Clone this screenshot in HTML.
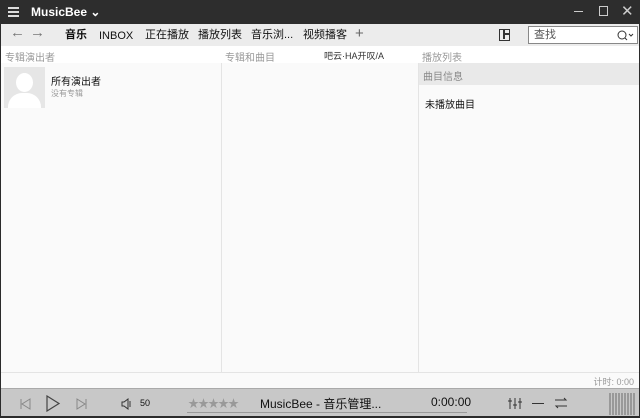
<!DOCTYPE html><html><head><meta charset="utf-8"><style>
*{margin:0;padding:0;box-sizing:border-box}
body{width:640px;height:418px;overflow:hidden;background:#2b2b2b;font-family:"Liberation Sans","Noto Sans CJK SC",sans-serif;font-size:11px;color:#111;position:relative}
.a{position:absolute}
.t span{line-height:14px;top:4px}
</style></head><body>
<div class="a" style="left:0;top:0;width:640px;height:24px;background:#2d2d2d;color:#fff">
 <div class="a" style="left:8px;top:7px;width:11px;height:2px;background:#ddd;box-shadow:0 4px 0 #ddd,0 8px 0 #ddd"></div>
 <div class="a" style="left:31px;top:5px;font-size:12px;font-weight:bold">MusicBee ⌄</div>
 <div class="a" style="left:574px;top:11px;width:9px;height:1px;background:#ccc"></div>
 <div class="a" style="left:599px;top:6px;width:9px;height:10px;border:1px solid #ccc"></div>
 <div class="a" style="left:621px;top:2px;font-size:15px;color:#ccc">✕</div>
</div>
<div class="a" style="left:1px;top:24px;width:638px;height:392px;background:#fafafa"></div>
<div class="a t" style="left:1px;top:24px;width:638px;height:22px;background:#ececec;font-size:11px">
 <span class="a" style="left:9px;top:2px;font-size:15px;color:#777">←</span>
 <span class="a" style="left:29px;top:2px;font-size:15px;color:#777">→</span>
 <span class="a" style="left:64px;font-weight:bold">音乐</span>
 <span class="a" style="left:98px;top:5px">INBOX</span>
 <span class="a" style="left:144px">正在播放</span>
 <span class="a" style="left:197px">播放列表</span>
 <span class="a" style="left:250px">音乐浏...</span>
 <span class="a" style="left:302px">视频播客</span>
 <span class="a" style="left:354px;top:3px;font-size:15px;color:#666">+</span>
 <div class="a" style="left:498px;top:5px;width:11px;height:12px;border:1.5px solid #333"><div style="position:absolute;left:3px;top:0;width:1.5px;height:9px;background:#333"></div><div style="position:absolute;left:3px;top:3px;width:6px;height:1.5px;background:#333"></div></div>
 <div class="a" style="left:527px;top:2px;width:110px;height:18px;background:#fff;border:1px solid #888;padding:2px 5px;color:#555;line-height:13px">查找
  <svg class="a" style="left:88px;top:3px" width="18" height="11"><circle cx="5" cy="5" r="4" fill="none" stroke="#333"/><path d="M8 8L10 10M12 4L14 6L16 4" stroke="#333" fill="none"/></svg></div>
</div>
<div class="a" style="left:1px;top:46px;width:638px;height:17px;background:#fff;color:#999;font-size:10px">
 <span class="a" style="left:4px;top:3px">专辑演出者</span>
 <span class="a" style="left:224px;top:3px">专辑和曲目</span>
 <span class="a" style="left:323px;top:3px;color:#333;font-size:9px">吧云·HA开叹/A</span>
 <span class="a" style="left:421px;top:3px">播放列表</span>
</div>
<div class="a" style="left:221px;top:63px;width:1px;height:309px;background:#e4e4e4"></div>
<div class="a" style="left:418px;top:63px;width:1px;height:309px;background:#e4e4e4"></div>
<div class="a" style="left:419px;top:63px;width:220px;height:22px;background:#e9e9e9;color:#888;padding:5px 4px;font-size:10px">曲目信息</div>
<div class="a" style="left:425px;top:96px;font-size:10px">未播放曲目</div>
<div class="a" style="left:4px;top:67px;width:41px;height:41px;background:#e6e6e6;overflow:hidden">
 <div class="a" style="left:12px;top:6px;width:17px;height:19px;border-radius:50%;background:#fff"></div>
 <div class="a" style="left:4px;top:26px;width:33px;height:30px;border-radius:14px 14px 0 0;background:#fff"></div>
</div>
<div class="a" style="left:51px;top:73px;font-size:10px">所有演出者</div>
<div class="a" style="left:51px;top:88px;font-size:8px;color:#999">没有专辑</div>
<div class="a" style="left:1px;top:372px;width:638px;height:16px;background:#fafafa;border-top:1px solid #e4e4e4"></div>
<div class="a" style="right:6px;top:375px;font-size:9px;color:#999">计时: 0:00</div>
<div class="a" style="left:1px;top:388px;width:638px;height:28px;background:#c8c8c8;border-top:1px solid #aaa">
 <svg class="a" style="left:19px;top:9px" width="11" height="12"><path d="M10 1L2 6L10 11Z M1 1V11" fill="none" stroke="#888"/></svg>
 <svg class="a" style="left:44px;top:6px" width="16" height="17"><path d="M2 1L14 8.5L2 16Z" fill="none" stroke="#444" stroke-width="1.2"/></svg>
 <svg class="a" style="left:75px;top:9px" width="11" height="12"><path d="M1 1L9 6L1 11Z M10 1V11" fill="none" stroke="#888"/></svg>
 <svg class="a" style="left:120px;top:9px" width="10" height="12"><path d="M1 4H3L7 1V11L3 8H1Z M9 3V9" fill="none" stroke="#333"/></svg>
 <span class="a" style="left:139px;top:9px;font-size:9px">50</span>
 <span class="a" style="left:187px;top:6px;font-size:11px;color:#999;letter-spacing:-1px">★★★★★</span>
 <span class="a" style="left:259px;top:6px;font-size:12px">MusicBee - 音乐管理...</span>
 <span class="a" style="left:430px;top:6px;font-size:12px">0:00:00</span>
 <div class="a" style="left:186px;top:23px;width:280px;height:1px;background:#999"></div>
 <svg class="a" style="left:507px;top:8px" width="14" height="13"><path d="M2 1V12M7 1V12M12 1V12M0 4H4M5 8H9M10 5H14" stroke="#333" fill="none"/></svg>
 <div class="a" style="left:531px;top:14px;width:12px;height:1px;background:#333"></div>
 <svg class="a" style="left:553px;top:8px" width="14" height="12"><path d="M1 3H12L10 1M13 9H2L4 11" stroke="#333" fill="none"/></svg>
 <div class="a" style="left:608px;top:4px;width:26px;height:22px;background:repeating-linear-gradient(90deg,#999 0 2px,transparent 2px 3px)"></div>
</div>
</body></html>
